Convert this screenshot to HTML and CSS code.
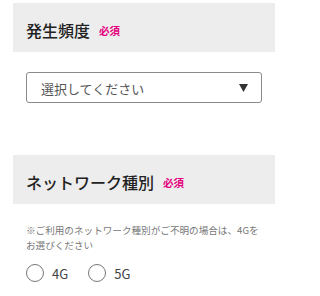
FILE: index.html
```html
<!DOCTYPE html>
<html lang="ja">
<head>
<meta charset="utf-8">
<link rel="stylesheet" href="styles.css">
</head>
<body>
<div class="form">
  <div class="head head-first">
    <h2 class="title">発生頻度</h2>
    <span class="req">必須</span>
  </div>
  <div class="field">
    <div class="select">
      <span class="select-text">選択してください</span>
      <svg class="arrow" width="9" height="8" viewBox="0 0 9 8"><polygon points="0,0 9,0 4.5,8" fill="#333"/></svg>
    </div>
  </div>
  <div class="head head-second">
    <h2 class="title">ネットワーク種別</h2>
    <span class="req">必須</span>
  </div>
  <div class="field">
    <p class="note">※ご利用のネットワーク種別がご不明の場合は、4Gをお選びください</p>
    <div class="radios">
      <label class="radio"><span class="circle"></span><span class="radio-label">4G</span></label>
      <label class="radio"><span class="circle"></span><span class="radio-label">5G</span></label>
    </div>
  </div>
</div>
</body>
</html>
```
FILE: styles.css
```css
html, body {
  margin: 0;
  padding: 0;
  background: #fff;
}
body {
  font-family: "Noto Sans CJK JP", "Noto Sans", sans-serif;
  color: #222;
}
.form {
  width: 262px;
  margin: 0 0 0 13px;
  padding-top: 3px;
}
.head {
  background: #ededed;
  height: 49px;
  display: flex;
  align-items: center;
  padding: 4px 13px 0 13px;
  box-sizing: border-box;
}
.head-second {
  margin-top: 52px;
}
.title {
  margin: 0;
  font-size: 16px;
  font-weight: 500;
  line-height: 1;
  color: #222;
}
.req {
  margin-left: 9px;
  font-size: 10.5px;
  font-weight: 700;
  color: #e6007e;
  line-height: 1;
  padding-top: 3px;
}
.field {
  padding: 0 13px;
}
.select {
  margin-top: 20px;
  height: 31px;
  border: 1px solid #8a8a8a;
  border-radius: 3px;
  box-sizing: border-box;
  display: flex;
  align-items: center;
  justify-content: space-between;
  padding: 0 13px 0 14px;
}
.select-text {
  font-size: 13px;
  color: #555;
  line-height: 1;
  padding-top: 2px;
}
.arrow {
  display: block;
}
.note {
  margin: 19px 0 0 0;
  font-size: 9.6px;
  line-height: 15px;
  color: #777;
}
.radios {
  margin-top: 11px;
  display: flex;
  gap: 20px;
}
.radio {
  display: flex;
  align-items: center;
  gap: 8px;
}
.circle {
  width: 18px;
  height: 18px;
  border: 1px solid #777;
  border-radius: 50%;
  box-sizing: border-box;
  background: #fff;
}
.radio-label {
  font-size: 13px;
  color: #444;
  line-height: 1;
}
```
